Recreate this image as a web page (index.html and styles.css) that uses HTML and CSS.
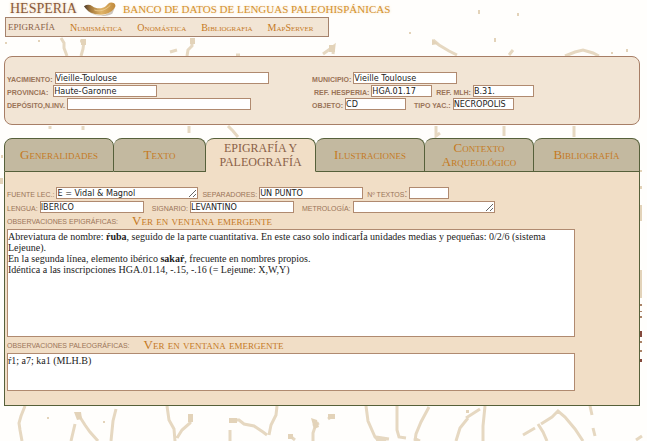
FILE: index.html
```html
<!DOCTYPE html>
<html lang="es">
<head>
<meta charset="utf-8">
<title>Hesperia</title>
<link rel="stylesheet" href="styles.css">
</head>
<body>
<svg class="backdrop" viewBox="0 0 647 441" preserveAspectRatio="xMidYMin slice" aria-hidden="true">
  <g fill="none" stroke="#e6d8c1" stroke-width="3">
    <path d="M61 38l3 5 0 5 3 8M80 41h6M84 41l-1 8-2 7M170 52l7-2M192 39v7l-4 4-1 6M323 54l7-5 4-3-1 8M433 40l6 5 10 6 8 4M509 55l4-5M565 56l10-4 8-2 10 3 6 3M236 55h4"/>
    <path d="M50 126v3M83 126v4M189 126v7M228 126l5 5 5 6M436 126v10l4-3M504 126v10M574 126v11"/>
    <path d="M25 406l-4 10-2 7 1 7 2 11M78 414l7 11 5 7 8 9M75 424l-4 17M116 409l-3 12-2 20M167 406l2 14 5 9 1 12M177 438l5-8 8-7 0-6M231 420h8l5 4 10 2 9 6 4 3M230 430v11M277 406l-1 9-5 10-2 10M290 436l5 4M315 420v7l-2 6v8M313 426l6-3M328 419l6-4M366 406l2 15 7 16 4 4M376 437l13 2M397 406v24l2 7 7 1M429 407l-8 15-5 12-1 7M376 440h10M414 438l6 3M456 441l4-13 8-10M466 418l14-9M485 406l-2 20v15M523 435l12-7M538 424l5 8 4 9M541 424l11-7 6-6 7 6 10 12 8 12M590 406l2 9M593 428l2 8M636 440l6-4"/>
  </g>
  <g fill="#e3d3b9">
    <path d="M74 412h7l1 7-5 1zM188 414h5v8h-5zM229 418h8v5h-8zM288 434h5v5h-5zM311 418l6 2 2 7-5 2zM328 414h7v5h-7zM432 39l6 5-6 1zM329 45h6v7h-6zM190 38h5v6h-5zM81 39h5v6h-5z"/>
    <path d="M1 155h2v3H1zM0 178h3v6H0zM478 10h2v4h-2zM517 13h2v3h-2zM494 38h2v4h-2zM409 32h2v2h-2zM611 52h2v2h-2zM626 49h2v3h-2zM5 42h2v2H5zM38 40h2v2h-2zM466 410h3v3h-3zM47 417h2v2h-2zM103 421h2v2h-2zM640 170h2v2h-2zM640 186h2v3h-2zM640 205h2v16h-2zM640 270h2v28h-2z"/>
  </g>
  <g fill="#a98266">
    <path d="M640 304h2v2h-2zM640 311h2v1h-2zM640 316h2v2h-2zM640 341h2v2h-2zM640 350h2v2h-2z"/>
    <path fill="#84493c" d="M640 331h2v6h-2zM640 359h2v3h-2z"/>
  </g>
</svg>

<div class="page">
  <header class="masthead">
    <h1 class="brand">HESPERIA</h1>
    <svg class="emblem" viewBox="0 0 36 16" aria-hidden="true">
      <defs>
        <linearGradient id="bronze" x1="0" x2="1" y1="0" y2="0">
          <stop offset="0" stop-color="#49392b"/>
          <stop offset=".22" stop-color="#a67a3c"/>
          <stop offset=".55" stop-color="#e0b469"/>
          <stop offset="1" stop-color="#c08a3c"/>
        </linearGradient>
      </defs>
      <path d="M2 6c5 6 11 9 17 9 7-1 11-4 15-9l-3 7c-7 4-18 3-25-2z" fill="#9d8d7b" opacity=".5"/>
      <path d="M1 5c3-2 6-2 9 0 4 3 10 3 14 0 2-2 3-4 6-4 4 0 5 3 4 5-3 5-8 8-15 8C11 14 5 11 1 5z" fill="url(#bronze)"/>
      <path d="M12 9c5 2 11 1 17-5" fill="none" stroke="#ecca8a" stroke-width="1"/>
    </svg>
    <p class="tagline">BANCO DE DATOS DE LENGUAS PALEOHISPÁNICAS</p>
  </header>

  <nav class="menu">
    <a class="menu-link current" href="#epigrafia">EPIGRAFÍA</a>
    <a class="menu-link" href="#numismatica">Numismática</a>
    <a class="menu-link" href="#onomastica">Onomástica</a>
    <a class="menu-link" href="#bibliografia">Bibliografia</a>
    <a class="menu-link" href="#mapserver">MapServer</a>
  </nav>

  <section class="summary">
    <div class="column">
      <div class="row"><div class="field"><label for="yac">YACIMIENTO:</label><input class="w-xl" id="yac" value="Vieille-Toulouse"></div></div>
      <div class="row"><div class="field wide"><label for="prov">PROVINCIA:</label><input class="w-m" id="prov" value="Haute-Garonne"></div></div>
      <div class="row"><div class="field"><label for="dep">DEPÓSITO,N.INV.</label><input class="w-l" id="dep"></div></div>
    </div>
    <div class="column">
      <div class="row"><div class="field"><label for="mun">MUNICIPIO:</label><input class="w-m" id="mun" value="Vieille Toulouse"></div></div>
      <div class="row indent"><div class="field"><label for="hes">REF. HESPERIA:</label><input class="w-s" id="hes" value="HGA.01.17"></div>
        <div class="field"><label for="mlh">REF. MLH:</label><input class="w-s" id="mlh" value="B.31."></div></div>
      <div class="row spaced"><div class="field"><label for="obj">OBJETO:</label><input class="w-s" id="obj" value="CD"></div>
        <div class="field"><label for="tipo">TIPO YAC.:</label><input class="w-s" id="tipo" value="NECROPOLIS"></div></div>
    </div>
  </section>

  <main class="record">
    <div class="tabs" role="tablist">
      <button class="tab" role="tab">Generalidades</button>
      <button class="tab" role="tab">Texto</button>
      <button class="tab selected" role="tab" aria-selected="true">EPIGRAFÍA Y<br>PALEOGRAFÍA</button>
      <button class="tab" role="tab">Ilustraciones</button>
      <button class="tab" role="tab">Contexto<br>Arqueológico</button>
      <button class="tab" role="tab">Bibliografía</button>
    </div>
    <div class="sheet">
      <div class="row tall">
        <div class="field"><label for="fue">FUENTE LEC.:</label><textarea class="area" id="fue">E = Vidal &amp; Magnol</textarea></div>
        <div class="field"><label for="sep">SEPARADORES:</label><input class="w-m" id="sep" value="UN PUNTO"></div>
        <div class="field"><label for="num">Nº TEXTOS<span class="colon">:</span></label><input class="w-xs" id="num"></div>
      </div>
      <div class="row spaced">
        <div class="field"><label for="len">LENGUA:</label><input class="w-m" id="len" value="IBERICO"></div>
        <div class="field"><label for="sig">SIGNARIO:</label><input class="w-m" id="sig" value="LEVANTINO"></div>
        <div class="field"><label for="met">METROLOGÍA:</label><textarea class="area" id="met"></textarea></div>
      </div>
      <div class="caption"><span id="obs-epi">OBSERVACIONES EPIGRÁFICAS:</span><a href="#ventana-epi">Ver en ventana emergente</a></div>
      <div class="notes long" role="textbox" contenteditable="true" spellcheck="false" aria-multiline="true" aria-labelledby="obs-epi">
        <p>Abreviatura de nombre: <b>ŕuba</b>, seguido de la parte cuantitativa. En este caso solo indicarÍa unidades medias y pequeñas: 0/2/6 (sistema Lejeune).</p>
        <p>En la segunda línea, elemento ibérico <b>sakaŕ</b>, frecuente en nombres propios.</p>
        <p>Idéntica a las inscripciones HGA.01.14, -.15, -.16 (= Lejeune: X,W,Y)</p>
      </div>
      <div class="caption"><span id="obs-pal">OBSERVACIONES PALEOGRÁFICAS:</span><a href="#ventana-pal">Ver en ventana emergente</a></div>
      <div class="notes short" role="textbox" contenteditable="true" spellcheck="false" aria-multiline="true" aria-labelledby="obs-pal"><p>ŕ1; a7; ka1 (MLH.B)</p></div>
    </div>
  </main>
</div>
</body>
</html>
```
FILE: styles.css
```css
* { box-sizing: border-box; }

body {
  margin: 0;
  background: #fffefc;
  color: #222;
  font-family: "Liberation Serif", serif;
}

h1, p { margin: 0; }
a { text-decoration: none; }

.backdrop {
  position: absolute;
  top: 0;
  left: 0;
  width: 100%;
  z-index: -1;
}

.page { padding: 0 7px 0 4px; }

.masthead {
  display: flex;
  align-items: center;
  gap: 6px;
  height: 17px;
  padding-left: 6px;
}

.brand {
  color: #8a5a3c;
  font-size: 14px;
  font-weight: 400;
  text-shadow: 0 0 3px #e8c9a0;
}

.emblem { width: 34px; height: 16px; }

.tagline {
  color: #d4922e;
  font-size: 11px;
  white-space: nowrap;
  text-shadow: 0 0 3px #f3d9b4;
}

.menu {
  display: flex;
  align-items: center;
  gap: 15px;
  width: 324px;
  height: 20px;
  margin-left: 1px;
  padding-left: 2px;
  background: #f2e5d5;
  border: 1px solid #a5826c;
}

.menu-link {
  color: #c5791f;
  font-size: 10px;
  font-variant: small-caps;
}

.menu-link.current {
  color: #8a6146;
  font-size: 9px;
}

.summary {
  display: grid;
  grid-template-columns: 307fr 329fr;
  margin-top: 19px;
  padding: 15px 0 14px 2px;
  background: #f2e5d5;
  border: 1px solid #a77e66;
  border-radius: 8px;
}

.column {
  display: flex;
  flex-direction: column;
  gap: 1px;
}

.row {
  display: flex;
  align-items: flex-end;
  gap: 4px;
}

.row.spaced { gap: 8px; }
.row.indent { padding-left: 2px; }
.row.tall { height: 14px; }

.field {
  display: flex;
  align-items: flex-end;
  gap: 2px;
}

.field.wide { gap: 5px; }

label, .caption span {
  color: #9a7458;
  font-family: "Liberation Sans", sans-serif;
  font-size: 7px;
  line-height: 9px;
  white-space: nowrap;
}

.summary label { font-weight: 700; }
.colon { font-size: 10px; }

input, .area {
  display: block;
  height: 12px;
  margin: 0;
  padding: 0;
  background: #fff;
  border: 1px solid #b08a70;
  border-radius: 0;
  color: #222;
  font-family: "DejaVu Sans Condensed", "Noto Sans", sans-serif;
  font-size: 9px;
  line-height: 10px;
}

.area { width: 142px; overflow: hidden; }

.w-xs { width: 40px; }
.w-s { width: 61px; }
.w-m { width: 104px; }
.w-l { width: 184px; }
.w-xl { width: 214px; }

.record { margin-top: 13px; }

.tabs {
  display: grid;
  grid-template-columns: 110fr 92fr 110fr 109fr 109fr 106fr;
}

.tab {
  height: 34px;
  padding: 0;
  background: #c3b9a0;
  border: 1px solid #56603a;
  border-left-width: 0;
  border-radius: 8px 8px 0 0;
  color: #c5791f;
  font-family: "Liberation Serif", serif;
  font-size: 13px;
  font-variant: small-caps;
  line-height: 14px;
}

.tab:first-child { border-left-width: 1px; }

.tab.selected {
  background: #f1dec6;
  border-bottom-color: #f1dec6;
  color: #8a6146;
  font-size: 12px;
}

.sheet {
  padding: 13px 64px 14px 2px;
  background: #f1dec6;
  border: 1px solid #56603a;
  border-top: 0;
}

.sheet .row + .row { margin-top: 2px; }

.caption {
  display: flex;
  align-items: center;
  gap: 14px;
  height: 16px;
}

.caption a {
  color: #c5791f;
  font-size: 13px;
  font-variant: small-caps;
  line-height: 14px;
}

.notes {
  padding: 1px 0;
  background: #fff;
  border: 1px solid #b08a70;
  font-size: 10px;
  line-height: 11px;
}

.notes.long { min-height: 108px; }
.notes.short { min-height: 38px; }
```
